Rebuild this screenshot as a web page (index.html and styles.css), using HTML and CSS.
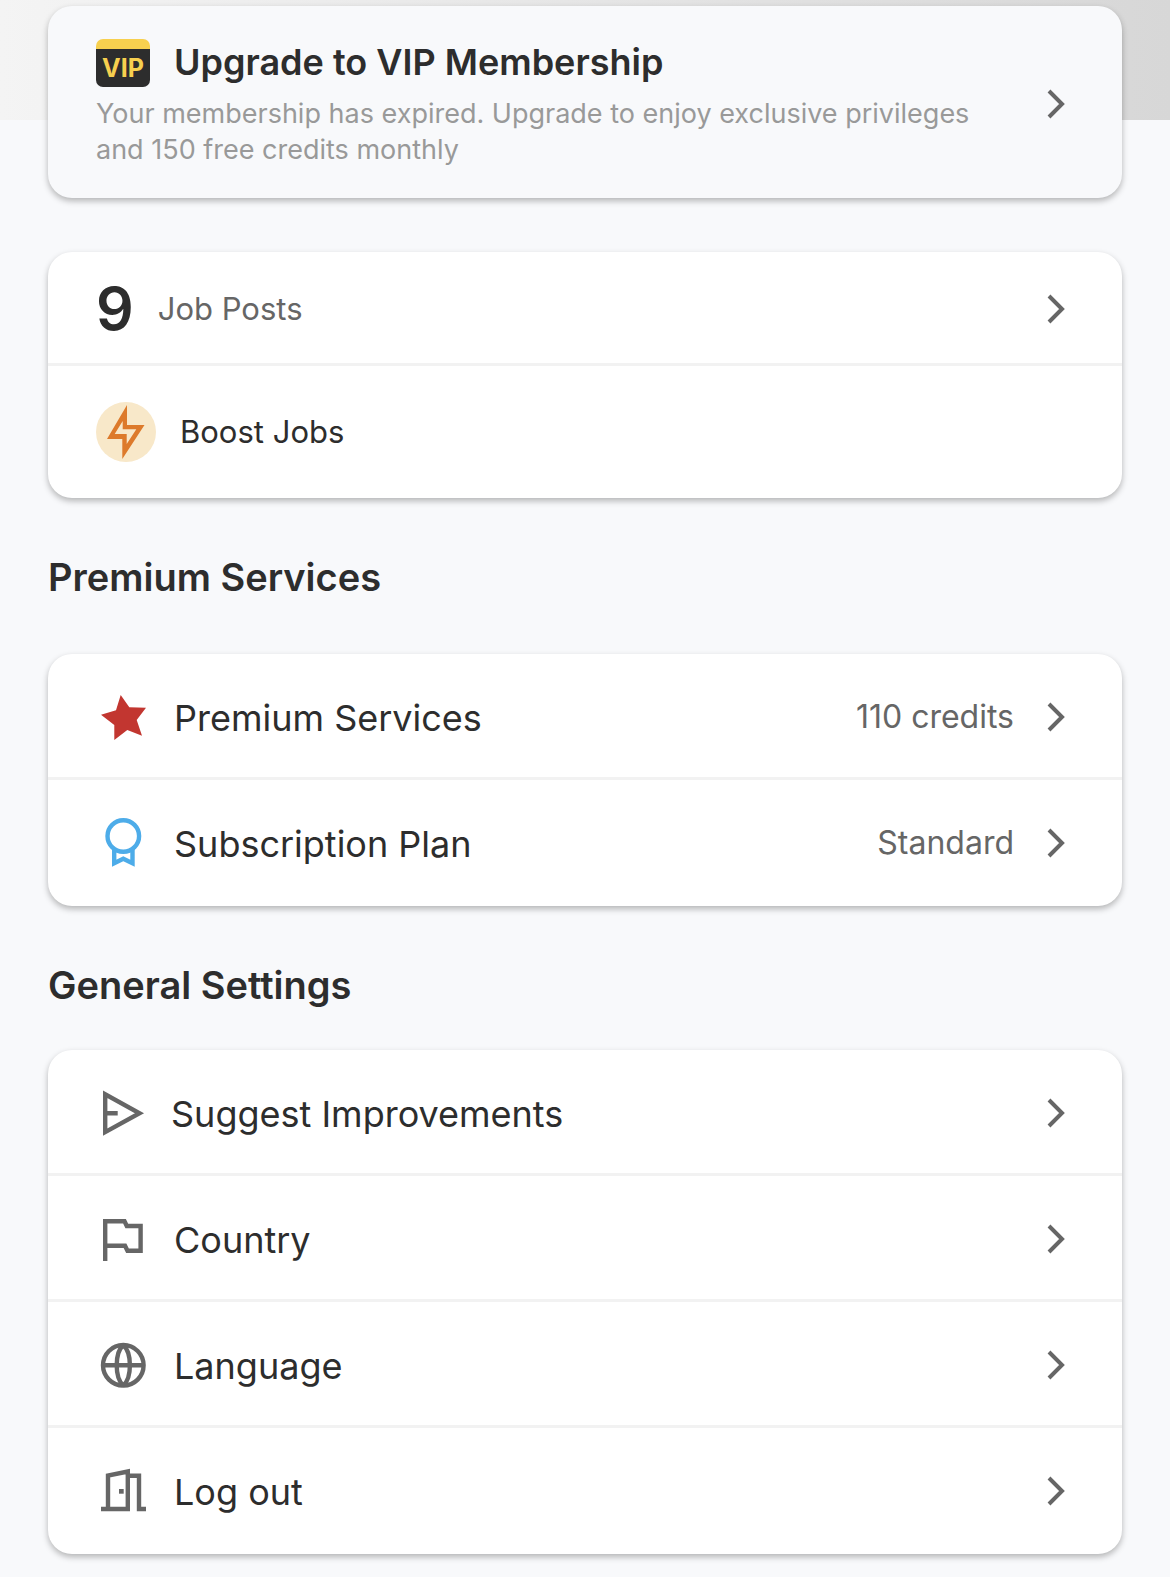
FILE: index.html
```html
<!DOCTYPE html>
<html lang="en">
<head>
<meta charset="utf-8">
<meta name="viewport" content="width=device-width, initial-scale=1">
<title>Account</title>
<link rel="stylesheet" href="styles.css">
</head>
<body>
<svg class="sprite" aria-hidden="true">
  <symbol id="chevron" viewBox="0 0 18 30"><path d="M2 2l13 13L2 28" fill="none" stroke="currentColor" stroke-width="4"/></symbol>
</svg>
<main class="page">
  <a class="card vip" href="#vip">
    <span class="vip-body">
      <span class="vip-head">
        <span class="vip-badge">VIP</span>
        <span class="vip-title">Upgrade to VIP Membership</span>
      </span>
      <span class="vip-text">Your membership has expired. Upgrade to enjoy exclusive privileges and 150 free credits monthly</span>
    </span>
    <svg class="chevron" aria-hidden="true"><use href="#chevron"/></svg>
  </a>

  <nav class="card jobs" aria-label="Jobs">
    <a class="row row-posts" href="#posts">
      <span class="count">9</span>
      <span class="label label-small label-muted">Job Posts</span>
      <svg class="chevron" aria-hidden="true"><use href="#chevron"/></svg>
    </a>
    <a class="row" href="#boost">
      <svg class="icon-round" viewBox="0 0 60 60" aria-hidden="true">
        <circle cx="30" cy="30" r="30" fill="#f8e8c9"/>
        <path fill="#dd7a2b" fill-rule="evenodd" d="M31 3V23H48.500L26.300 57V37H11zM26.700 19L18.700 32H30.700V42L40.300 27.300H26.700z"/>
      </svg>
      <span class="label label-small">Boost Jobs</span>
    </a>
  </nav>

  <section class="group group-premium">
    <h2 class="heading">Premium Services</h2>
    <nav class="card" aria-label="Premium Services">
      <a class="row" href="#premium">
        <svg class="icon" viewBox="0 0 54 54" aria-hidden="true"><path fill="#c23630" d="M24.700 5L33.300 17.300 50 17.700 40.700 30 46 45.700 31.300 40 18.300 50V35L5 24.700 20 20.300z"/></svg>
        <span class="label">Premium Services</span>
        <span class="value">110 credits</span>
        <svg class="chevron" aria-hidden="true"><use href="#chevron"/></svg>
      </a>
      <a class="row" href="#plan">
        <svg class="icon" viewBox="0 0 54 54" aria-hidden="true"><g fill="none" stroke="#4dace9" stroke-width="4.400"><circle cx="27.300" cy="20" r="15.800"/><path d="M18.200 33V47.300L27.300 42.800 36.500 47.300V33"/></g></svg>
        <span class="label">Subscription Plan</span>
        <span class="value">Standard</span>
        <svg class="chevron" aria-hidden="true"><use href="#chevron"/></svg>
      </a>
    </nav>
  </section>

  <section class="group">
    <h2 class="heading">General Settings</h2>
    <nav class="card" aria-label="General Settings">
      <a class="row" href="#suggest">
        <svg class="icon icon-narrow" viewBox="0 0 51 54" aria-hidden="true"><path fill="none" stroke="currentColor" stroke-width="4.400" d="M9.200 8.300V46.100L43.500 27.200zM9 27.200H21.700"/></svg>
        <span class="label">Suggest Improvements</span>
        <svg class="chevron" aria-hidden="true"><use href="#chevron"/></svg>
      </a>
      <a class="row" href="#country">
        <svg class="icon" viewBox="0 0 54 54" aria-hidden="true"><path fill="none" stroke="currentColor" stroke-width="4.400" d="M9.200 49V9.200H28.500L30.800 14H44.600V38.800H31.500L29 33.800H9"/></svg>
        <span class="label">Country</span>
        <svg class="chevron" aria-hidden="true"><use href="#chevron"/></svg>
      </a>
      <a class="row" href="#language">
        <svg class="icon" viewBox="0 0 54 54" aria-hidden="true"><g fill="none" stroke="currentColor" stroke-width="4.400"><circle cx="27.300" cy="27.300" r="20.300"/><path d="M7 27.300H47.600M27.300 7C18.500 15 18.500 39.600 27.300 47.600M27.300 7C36.100 15 36.100 39.600 27.300 47.600"/></g></svg>
        <span class="label">Language</span>
        <svg class="chevron" aria-hidden="true"><use href="#chevron"/></svg>
      </a>
      <a class="row" href="#logout">
        <svg class="icon" viewBox="0 0 54 54" aria-hidden="true"><path fill="none" stroke="currentColor" stroke-width="4.400" d="M5 45H31.800V7.500L12 11.500V45M34 11.800H43V45H50"/><path fill="currentColor" d="M23 25h4.700v4.700H23z"/></svg>
        <span class="label">Log out</span>
        <svg class="chevron" aria-hidden="true"><use href="#chevron"/></svg>
      </a>
    </nav>
  </section>
</main>
</body>
</html>
```
FILE: styles.css
```css
* {
  box-sizing: border-box;
}

body {
  margin: 0;
  background: linear-gradient(90deg, #f4f4f4, #d7d7d7) top / 100% 120px no-repeat #f8f9fb;
  color: #2d2d2d;
  font-family: Inter, "Liberation Sans", sans-serif;
}

.sprite {
  display: none;
}

.page {
  padding: 6px 48px 23px;
}

.card {
  display: block;
  border-radius: 24px;
  background: #fff;
  box-shadow: 0 3px 6px rgba(0, 0, 0, 0.28);
}

.vip {
  display: flex;
  align-items: center;
  gap: 48px;
  padding: 33px 57px 30px 48px;
  background: #f8f9fb;
  color: inherit;
  text-decoration: none;
}

.vip-body {
  display: flex;
  flex: 1;
  flex-direction: column;
  gap: 9px;
}

.vip-head {
  display: flex;
  align-items: center;
  gap: 24px;
}

.vip-badge {
  width: 54px;
  height: 48px;
  padding-top: 10px;
  border-radius: 7px;
  background: linear-gradient(#f7d04f 10px, #2d2d2d 10px);
  color: #f7d04f;
  font-size: 25px;
  font-weight: 700;
  line-height: 38px;
  text-align: center;
}

.vip-title {
  padding-bottom: 2px;
  font-size: 36px;
  font-weight: 600;
  line-height: 46px;
}

.vip-text {
  color: #999;
  font-size: 27px;
  line-height: 36px;
}

.jobs {
  margin-top: 54px;
}

.row {
  display: flex;
  align-items: center;
  gap: 24px;
  padding: 36px 57px 33px 48px;
  border-bottom: 3px solid #f2f2f2;
  color: inherit;
  text-decoration: none;
}

.row:last-child {
  padding-bottom: 36px;
  border-bottom: 0;
}

.row-posts {
  padding-top: 30px;
  padding-bottom: 27px;
}

.count {
  font-size: 59px;
  font-weight: 600;
  line-height: 54px;
}

.icon {
  width: 54px;
  height: 54px;
  color: #666;
}

.icon-narrow {
  width: 51px;
}

.icon-round {
  width: 60px;
  height: 60px;
}

.label {
  flex: 1;
  padding-top: 2px;
  font-size: 36px;
  line-height: 48px;
}

.label-small {
  padding-top: 0;
  font-size: 31px;
}

.label-muted,
.value {
  color: #666;
}

.value {
  margin-right: 9px;
  font-size: 32px;
  line-height: 48px;
}

.chevron {
  flex: none;
  width: 18px;
  height: 30px;
  color: #666;
}

.group {
  padding-top: 55px;
}

.heading {
  margin: 0 0 41px;
  font-size: 38px;
  font-weight: 600;
  line-height: 48px;
}

.group-premium .heading {
  margin-bottom: 53px;
}
```
